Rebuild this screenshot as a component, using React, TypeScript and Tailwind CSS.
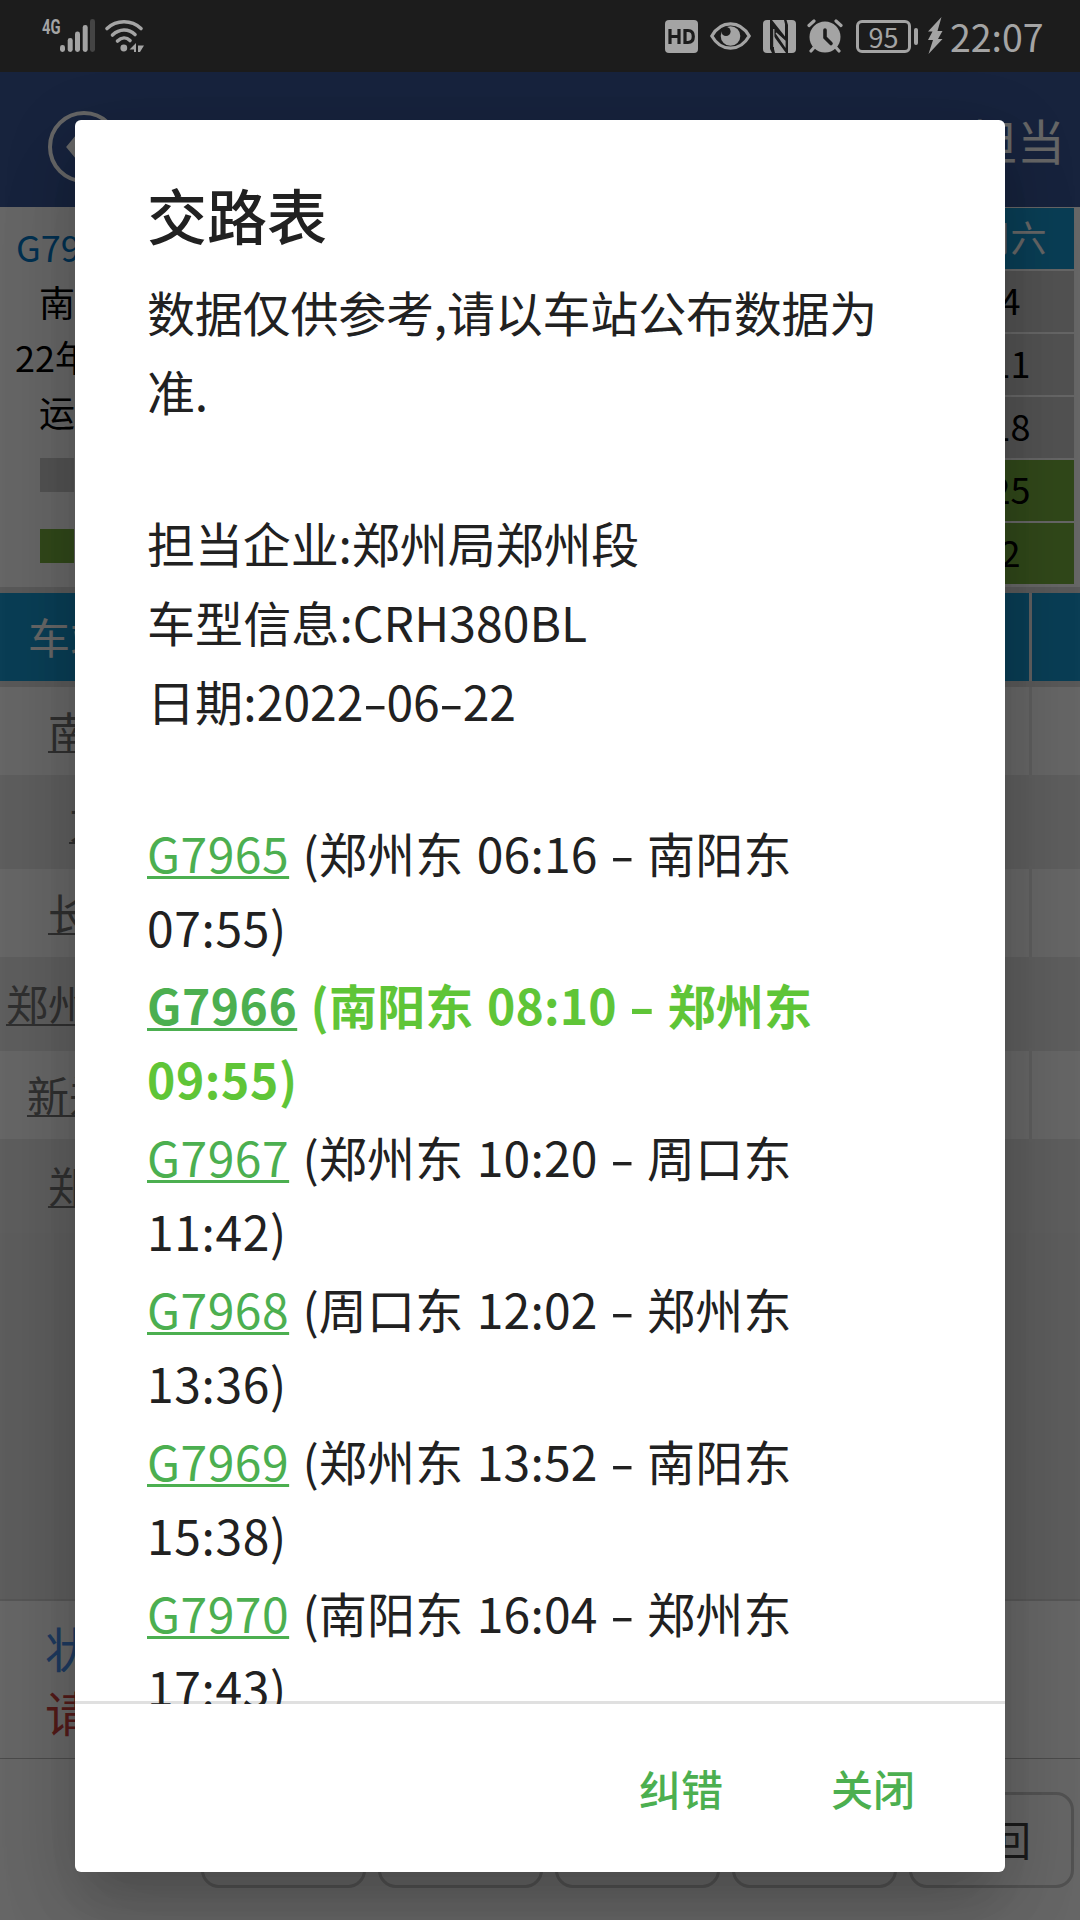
import React from "react";

const days = [
  { label: "4", running: false },
  { label: "11", running: false },
  { label: "18", running: false },
  { label: "25", running: true },
  { label: "2", running: true },
];

const stations = ["南阳东", "方城", "长葛北", "郑州航空港", "新郑机场", "郑州东"];

const routes = [
  { train: "G7965", from: "郑州东", start: "06:16", to: "南阳东", end: "07:55" },
  { train: "G7966", from: "南阳东", start: "08:10", to: "郑州东", end: "09:55", current: true },
  { train: "G7967", from: "郑州东", start: "10:20", to: "周口东", end: "11:42" },
  { train: "G7968", from: "周口东", start: "12:02", to: "郑州东", end: "13:36" },
  { train: "G7969", from: "郑州东", start: "13:52", to: "南阳东", end: "15:38" },
  { train: "G7970", from: "南阳东", start: "16:04", to: "郑州东", end: "17:43" },
];

const SignalIcon = () => (
  <svg width="54" height="36" viewBox="0 0 54 36" fill="#a4a4a4" className="overflow-visible">
    <text x="0" y="15.5" fontSize="20.5" fontWeight="700" textLength="18.5" lengthAdjust="spacingAndGlyphs" fontFamily="Roboto, sans-serif">
      4G
    </text>
    <rect x="18" y="27" width="5" height="7" rx="2.4" />
    <rect x="25.7" y="20" width="5" height="14" rx="2.4" />
    <rect x="33" y="13.5" width="5" height="20.5" rx="2.4" />
    <rect x="40.7" y="7" width="5" height="27" rx="2.4" />
    <rect x="48" y="1" width="5" height="33" rx="2.4" fill="#444" />
  </svg>
);

const WifiIcon = () => (
  <svg width="42" height="36" viewBox="0 0 42 36" fill="none" stroke="#a4a4a4" strokeWidth="3.6" strokeLinecap="round">
    <path d="M3 10.5C12.5 1.5 27.5 1.5 37 10.5" />
    <path d="M8.5 17C15.5 10.5 24.5 10.5 31 16.5" />
    <path d="M13.5 23C17.5 19 22.5 19 26 22.5" />
    <circle cx="19.8" cy="30" r="3.4" fill="#a4a4a4" stroke="none" />
    <path d="M32 25v9h-2v-2.500h-4.500zM34 25v2.500h6l-4 6.500h-2z" fill="#a4a4a4" stroke="none" />
  </svg>
);

const HdIcon = () => (
  <svg width="33" height="33" viewBox="0 0 33 33">
    <rect width="33" height="33" rx="4" fill="#a4a4a4" />
    <path d="M5 9v15M14 9v15M5 16.5h9M20 10.5v12h3c3.5 0 5.3-2 5.3-6s-1.8-6-5.3-6z" fill="none" stroke="#1c1c1c" strokeWidth="3.2" />
  </svg>
);

const EyeIcon = () => (
  <svg width="41" height="28" viewBox="0 0 41 28">
    <path d="M1.8 14C11-2.2 30-2.2 39.2 14 30 30.2 11 30.2 1.8 14z" fill="none" stroke="#a4a4a4" strokeWidth="3.2" />
    <circle cx="20.5" cy="14" r="9.8" fill="#a4a4a4" />
    <circle cx="16" cy="9.5" r="4.6" fill="#1c1c1c" />
  </svg>
);

const NfcIcon = () => (
  <svg width="33" height="33" viewBox="0 0 33 33">
    <rect width="33" height="33" rx="4" fill="#a4a4a4" />
    <path d="M7 0h2l13 16.500V4L21 0h2.500L25 5v28h-2L11 16.500V29l1 4H9L7 29z" fill="#1c1c1c" />
    <path d="M10.8 9v18M13 13l9 13v-5z" fill="#a4a4a4" stroke="#a4a4a4" strokeWidth="1.2" />
  </svg>
);

const AlarmIcon = () => (
  <svg width="36" height="34" viewBox="0 0 36 34">
    <circle cx="18" cy="18" r="15.5" fill="#a4a4a4" />
    <path d="M2 6.5L7 2M34 6.5L29 2M7.5 28L4 32M28.5 28L32 32" stroke="#a4a4a4" strokeWidth="3.2" strokeLinecap="round" />
    <path d="M18 11v7.5l6 6" fill="none" stroke="#1c1c1c" strokeWidth="3.6" strokeLinecap="round" />
  </svg>
);

const BoltIcon = () => (
  <svg width="16" height="38" viewBox="0 0 16 38">
    <path d="M14.5 0L1 14.5h4.5L1 23h5L1.5 37 15.5 22H11l4.5-8h-5z" fill="#a4a4a4" />
  </svg>
);

const StatusBar = () => (
  <div className="flex h-[72px] items-start justify-between bg-[#1c1c1c] pr-[38px] pl-[42px] text-[#a4a4a4]">
    <div className="flex gap-[8px] pt-[18px]">
      <SignalIcon />
      <WifiIcon />
    </div>
    <div className="flex h-[72px] items-center">
      <HdIcon />
      <div className="ml-[12px]">
        <EyeIcon />
      </div>
      <div className="ml-[12px]">
        <NfcIcon />
      </div>
      <div className="ml-[11px]">
        <AlarmIcon />
      </div>
      <div className="ml-[13px] flex h-[33px] w-[55px] items-center justify-center rounded-[6px] border-3 border-[#a4a4a4] text-[27px] leading-none">
        95
      </div>
      <div className="ml-[3px] h-[17px] w-[4px] rounded-sm bg-[#a4a4a4]" />
      <div className="ml-[9px]">
        <BoltIcon />
      </div>
      <p className="ml-[7px] w-[92px] text-[37.5px] leading-[70px] whitespace-nowrap">22:07</p>
    </div>
  </div>
);

const AppBar = () => (
  <div className="flex h-[135px] items-center justify-between bg-[#3b5998] pr-[15px] pl-[48px] text-white">
    <svg width="72" height="72" viewBox="0 0 72 72" className="mt-[15px]" fill="none" stroke="white">
      <circle cx="36" cy="36" r="34" strokeWidth="4" />
      <path d="M37 18L22 36l15 18M23 36h30" strokeWidth="6" />
    </svg>
    <h1 className="mb-[1px] text-[48px] leading-none">担当</h1>
  </div>
);

const TrainSummary = () => (
  <div className="flex h-[380px] justify-between bg-white pr-[6px] text-[36px]">
    <div className="flex w-[222px] flex-col pt-[12px] leading-[55px] whitespace-nowrap text-black">
      <p className="pl-[16px] text-[#0479c9]">G7966</p>
      <p className="pl-[39px]">南阳东</p>
      <p className="pl-[15px]">22年6月</p>
      <p className="pl-[39px]">运行图</p>
      <div className="mt-[19px] ml-[40px] size-[34px] bg-[#cccccc]" />
      <div className="mt-[37px] ml-[40px] size-[34px] bg-[#7cb342]" />
    </div>
    <div className="flex w-[125px] flex-col gap-[2px] pt-px text-center leading-[57px]">
      <div className="h-[61px] bg-[#1a9bd5] pr-[2px] text-white">周六</div>
      {days.map((day) => (
        <div
          key={day.label}
          className={day.running ? "h-[61px] bg-[#7cb342] pr-[2px] text-black" : "h-[61px] bg-[#cccccc] pr-[2px] text-black"}
        >
          {day.label}
        </div>
      ))}
    </div>
  </div>
);

const StationTable = () => (
  <div className="border-t-6 border-[#dedede] text-[42px]">
    <div className="flex h-[94px] items-center border-b-6 border-[#dedede] bg-[#1a9bd5] text-white">
      <p className="mb-[3px] w-[1029px] pl-[28px]">车站</p>
      <div className="h-full w-[3px] bg-[#eeeeee]" />
    </div>
    {stations.map((station) => (
      <div key={station} className="flex h-[91px] border-b-3 border-[#ebebeb] text-[#787878] odd:bg-[#ebebeb] even:bg-[#fefefe]">
        <div className="w-[1029px]">
          <p className="w-[222px] text-center leading-[86px] whitespace-nowrap underline decoration-2 underline-offset-[3px]">{station}</p>
        </div>
        <div className="w-[3px] bg-[#e9e9e9]" />
      </div>
    ))}
  </div>
);

const BottomPanel = () => (
  <div className="mt-auto h-[321px] border-t-2 border-[#d8d8d8] bg-white">
    <div className="h-[158px] border-b border-[#bbbbbb] pt-[14px] pl-[45px] text-[48px] leading-[64px]">
      <p className="text-[#4b91ee]">状态</p>
      <p className="text-[#d0453f]">请注意</p>
    </div>
    <div className="flex justify-end gap-[12px] pt-[33px] pr-[6px]">
      {["首页", "查询", "刷新", "分享", "返回"].map((label) => (
        <button key={label} className="h-[96px] w-[165px] rounded-[18px] border-3 border-[#cccccc] pr-[3px] pb-[3px] text-[41px] text-[#444444]">
          {label}
        </button>
      ))}
    </div>
  </div>
);

// the hyphen is drawn wider than the font's own glyph
const Dash = () => <span className="mx-[3px] inline-block origin-center scale-x-150">-</span>;

const RouteItem = ({ route }) => (
  <li className={route.current ? "h-[152px] font-bold text-[#5fc537]" : "h-[152px]"}>
    <p className="leading-[74px] whitespace-nowrap">
      <a className="tracking-[0.5px] text-[#4caf50] underline decoration-[2.5px] underline-offset-[3px]">{route.train}</a>
      <span className="tracking-[0.2px] [word-spacing:2.3px]">
        {" "}
        ({route.from} {route.start} <Dash /> {route.to}
      </span>
    </p>
    <p className="leading-[74px] tracking-[0.6px]">{route.end})</p>
  </li>
);

const RouteDialog = () => (
  <div className="flex h-[1752px] w-[930px] flex-col overflow-hidden rounded-[6px] bg-white text-[#212121] shadow-[0_33px_45px_-21px_rgba(0,0,0,0.1),0_50px_90px_0px_rgba(0,0,0,0.08),0_20px_70px_6px_rgba(0,0,0,0.14)]">
    <div className="h-[1584px] shrink-0 overflow-hidden px-[72px] pt-[50px] text-[48px] shadow-[inset_0_-3px_0_#e0e0e0]">
      <h2 className="text-[60px] leading-[88px] font-medium">交路表</h2>
      <div className="pt-[14px] leading-[79px]">
        <p className="w-[780px] tracking-[-0.2px]">数据仅供参考,请以车站公布数据为准.</p>
        <div className="pt-[73px]">
          <p className="tracking-[-0.1px]">担当企业:郑州局郑州段</p>
          <p className="tracking-[0.1px]">车型信息:CRH380BL</p>
          <p className="tracking-[0.1px]">
            日期:2022
            <Dash />
            06
            <Dash />
            22
          </p>
        </div>
      </div>
      <ul className="pt-[75px]">
        {routes.map((route) => (
          <RouteItem key={route.train} route={route} />
        ))}
      </ul>
    </div>
    <div className="flex flex-1 items-center justify-end gap-[108px] pr-[90px] pb-[2px] text-[42px] font-medium text-[#4caf50]">
      <button>纠错</button>
      <button>关闭</button>
    </div>
  </div>
);

const App = () => (
  <div
    lang="zh-CN"
    className="relative flex h-[1920px] w-[1080px] flex-col overflow-hidden bg-[#e9e9e9] font-['Noto_Sans_CJK_SC',sans-serif]"
  >
    <StatusBar />
    <AppBar />
    <TrainSummary />
    <StationTable />
    <BottomPanel />
    <div className="absolute inset-x-0 top-[72px] bottom-0 flex items-start justify-center bg-black/60 pt-[48px]">
      <RouteDialog />
    </div>
  </div>
);

export default App;
